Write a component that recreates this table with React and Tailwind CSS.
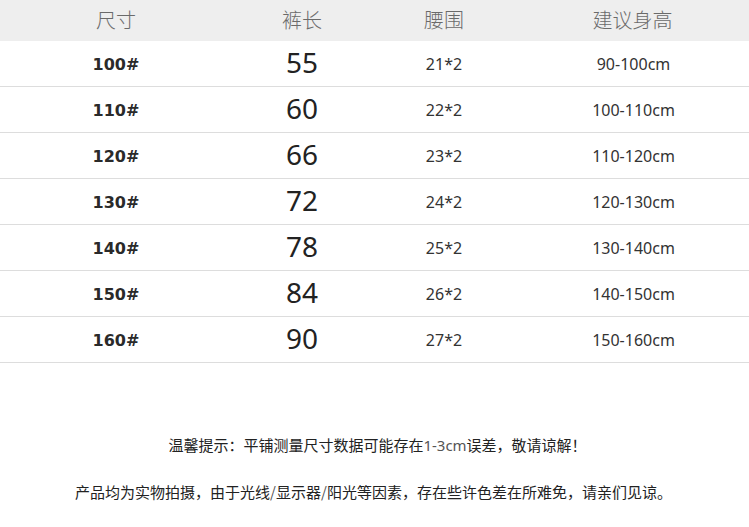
import React from "react";

const rows = [
  ["100#", "55", "21*2", "90-100cm"],
  ["110#", "60", "22*2", "100-110cm"],
  ["120#", "66", "23*2", "110-120cm"],
  ["130#", "72", "24*2", "120-130cm"],
  ["140#", "78", "25*2", "130-140cm"],
  ["150#", "84", "26*2", "140-150cm"],
  ["160#", "90", "27*2", "150-160cm"],
];

export default function App() {
  return (
    <div className="w-[749px] h-[527px] bg-white overflow-hidden font-['Noto_Sans','Noto_Sans_CJK_SC',sans-serif] text-[#333]">
      <div className="grid grid-cols-[232px_140px_144px_1fr] h-[41px] bg-[#eeeeee] text-[#6a6a6a] text-[20px] font-light items-center text-center">
        <div>尺寸</div>
        <div>裤长</div>
        <div>腰围</div>
        <div>建议身高</div>
      </div>
      {rows.map((r) => (
        <div
          key={r[0]}
          className="grid grid-cols-[232px_140px_144px_1fr] h-[46px] border-b border-[#dddddd] items-center text-center"
        >
          <div className="font-['DejaVu_Sans',sans-serif] font-bold text-[16px] text-[#2a2a2a] pt-[3px]">{r[0]}</div>
          <div className="text-[28px] leading-none -mt-[4px] text-[#222]">{r[1]}</div>
          <div className="text-[16px]">{r[2]}</div>
          <div className="text-[16px] pl-[2px]">{r[3]}</div>
        </div>
      ))}
      <div className="flex flex-col items-center pt-[72px] gap-[27px] text-[15px] leading-[20px] text-[#222] font-['Noto_Sans_CJK_SC',sans-serif]">
        <div className="pl-[6px]">温馨提示：平铺测量尺寸数据可能存在<span className="text-[#555] font-['Noto_Sans',sans-serif]">1-3cm</span>误差，敬请谅解！</div>
        <div className="pr-[2px]">产品均为实物拍摄，由于光线<span className="text-[#555]">/</span>显示器<span className="text-[#555]">/</span>阳光等因素，存在些许色差在所难免，请亲们见谅。</div>
      </div>
    </div>
  );
}
